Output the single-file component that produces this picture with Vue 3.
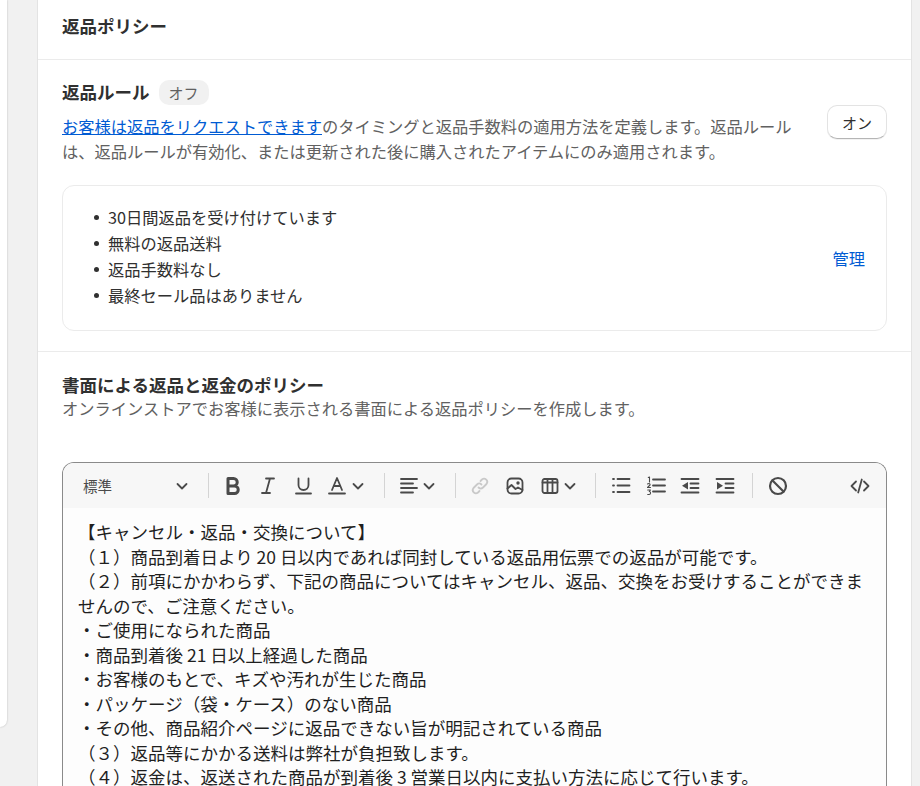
<script setup>
const rules = ['30日間返品を受け付けています', '無料の返品送料', '返品手数料なし', '最終セール品はありません']
const lines = [
  '【キャンセル・返品・交換について】',
  '（１）商品到着日より 20 日以内であれば同封している返品用伝票での返品が可能です。',
  '（２）前項にかかわらず、下記の商品についてはキャンセル、返品、交換をお受けすることができませんので、ご注意ください。',
  '・ご使用になられた商品',
  '・商品到着後 21 日以上経過した商品',
  '・お客様のもとで、キズや汚れが生じた商品',
  '・パッケージ（袋・ケース）のない商品',
  '・その他、商品紹介ページに返品できない旨が明記されている商品',
  '（３）返品等にかかる送料は弊社が負担致します。',
  '（４）返金は、返送された商品が到着後 3 営業日以内に支払い方法に応じて行います。'
]
</script>

<template>
  <div class="page">
    <aside class="side"></aside>
    <main class="card">
      <header class="head"><h2>返品ポリシー</h2></header>
      <section class="rules">
        <div class="rules-top">
          <div class="rules-text">
            <div class="title-row"><h3>返品ルール</h3><span class="badge">オフ</span></div>
            <p class="desc"><a>お客様は返品をリクエストできます</a>のタイミングと返品手数料の適用方法を定義します。返品ルールは、返品ルールが有効化、または更新された後に購入されたアイテムにのみ適用されます。</p>
          </div>
          <button class="on">オン</button>
        </div>
        <div class="rule-box">
          <ul><li v-for="r in rules" :key="r">{{ r }}</li></ul>
          <a class="manage">管理</a>
        </div>
      </section>
      <section class="written">
        <h3>書面による返品と返金のポリシー</h3>
        <p class="sub">オンラインストアでお客様に表示される書面による返品ポリシーを作成します。</p>
        <div class="editor">
          <div class="toolbar">
            <div class="select"><span>標準</span>
              <svg class="chev" viewBox="0 0 12 12"><path d="M1.500 4l4.500 4.500L10.500 4"/></svg>
            </div>
            <i class="sep"></i>
            <svg class="ic" viewBox="0 0 20 20"><path class="thick" d="M5 2.500h5.500a3.700 3.700 0 0 1 0 7.500H5zM5 10h6.500a3.700 3.700 0 0 1 0 7.500H5z"/></svg>
            <svg class="ic" viewBox="0 0 20 20"><path d="M8 2.500h8M4 17h8M12 2.500L8 17"/></svg>
            <svg class="ic" viewBox="0 0 20 20"><path d="M5.500 2.500V9a5 5 0 0 0 10 0V2.500M3 17.500h15"/></svg>
            <span class="combo">
              <svg class="ic" viewBox="0 0 20 20"><path d="M5 14L10 2l5 12M6.800 10h6.400M2 17.500h16"/></svg>
              <svg class="chev" viewBox="0 0 12 12"><path d="M1.500 4l4.500 4.500L10.500 4"/></svg>
            </span>
            <i class="sep nudge"></i>
            <span class="combo">
              <svg class="ic" viewBox="0 0 20 20"><path d="M2 3h16M2 7.500h12M2 12h16M2 16.500h12"/></svg>
              <svg class="chev" viewBox="0 0 12 12"><path d="M1.500 4l4.500 4.500L10.500 4"/></svg>
            </span>
            <i class="sep"></i>
            <svg class="ic off" viewBox="0 0 20 20"><path d="M8.500 11.500a3.200 3.200 0 0 0 4.500 0l3.500-3.500A3.200 3.200 0 0 0 12 3.500L10.500 5M11.500 8.500a3.200 3.200 0 0 0-4.500 0L3.500 12A3.200 3.200 0 0 0 8 16.500L9.500 15"/></svg>
            <svg class="ic" viewBox="0 0 20 20"><rect x="2.500" y="2.500" width="15" height="15" rx="4"/><circle class="solid" cx="13" cy="7" r="1.700"/><path d="M2.500 12.500l4-3.500 4 4 2.500-1.500 4.500 2.500"/></svg>
            <span class="combo">
              <svg class="ic" viewBox="0 0 20 20"><rect x="2.500" y="3" width="15" height="14" rx="2"/><path d="M2.500 6.500h15M7.500 3v14M12.500 3v14"/></svg>
              <svg class="chev" viewBox="0 0 12 12"><path d="M1.500 4l4.500 4.500L10.500 4"/></svg>
            </span>
            <i class="sep"></i>
            <svg class="ic" viewBox="0 0 20 20"><path d="M6.500 3h12M6.500 9.500h12M6.500 16h12"/><path d="M2 3h1M2 9.500h1M2 16h1"/></svg>
            <svg class="ic" viewBox="0 0 20 20"><path d="M7 3.500h12M7 9.500h12M7 15.500h12"/><path class="fine" d="M2.300 1.500l1.200-.5v5M1.500 8c1.500-1 3-.3 2.500 1l-2.500 2.500h3M1.700 14h2.800l-1.200 1.500c1.700 0 1.700 3-.2 3h-1.400"/></svg>
            <svg class="ic" viewBox="0 0 20 20"><path d="M1.500 3h17M10.500 7.500h8M10.500 12h8M1.500 16.500h17"/><path class="solid" d="M8 6v7.500L2 9.750z"/></svg>
            <svg class="ic" viewBox="0 0 20 20"><path d="M1.500 3h17M10.500 7.500h8M10.500 12h8M1.500 16.500h17"/><path class="solid" d="M2 6v7.500l6-3.750z"/></svg>
            <i class="sep wide"></i>
            <svg class="ic bold" viewBox="0 0 20 20"><circle cx="10" cy="10" r="8"/><path d="M4.500 4.500l11 11"/></svg>
            <span class="grow"></span>
            <svg class="ic" viewBox="0 0 20 20"><path d="M6 5.500L1.500 10 6 14.500M14 5.500l4.500 4.500L14 14.500M11.800 3.500l-3.600 13"/></svg>
          </div>
          <div class="content"><p v-for="(l, i) in lines" :key="i">{{ l }}</p></div>
        </div>
      </section>
    </main>
  </div>
</template>

<style>
html, body { margin: 0; height: 100%; overflow: hidden; background: #f1f1f1; }
</style>

<style scoped>
.page {
  height: 786px; overflow: hidden; display: flex; align-items: flex-start;
  background: #f1f1f1; color: #303030;
  font-family: "Noto Sans CJK JP", "Noto Sans", sans-serif; font-size: 16.25px; line-height: 25px;
}
.side {
  width: 7px; height: 727px; flex: none; background: #fff;
  border-radius: 0 0 8px 0; box-shadow: 0 0 2px rgba(0,0,0,.25);
}
.card {
  width: 873px; margin-left: 31px; min-height: 786px; flex: none; background: #fff;
  box-shadow: 0 0 0 1px #e3e3e3;
}
h2, h3, p, ul { margin: 0; padding: 0; }
h2, h3 { font-size: 17.5px; font-weight: 700; line-height: 25px; color: #303030; }
.head { height: 46px; padding: 13px 24px 0; border-bottom: 1px solid #ebebeb; }
.rules { padding: 20px 24px 20px; border-bottom: 1px solid #ebebeb; }
.rules-top { display: flex; align-items: center; gap: 24px; }
.rules-text { flex: 1; min-width: 0; }
.title-row { display: flex; align-items: center; gap: 9px; height: 25px; }
.title-row h3 { margin-bottom: 2px; }
.badge {
  background: #f1f1f1; color: #616161; border-radius: 10px; height: 25px; padding: 0 10px;
  font-size: 15px; line-height: 25px;
}
.desc { color: #616161; margin-top: 9px; }
.desc a { color: #005bd3; text-decoration: underline; }
.on {
  flex: none; width: 60px; height: 34px; padding: 0; background: #fff; color: #303030;
  border: 1px solid #e3e3e3; border-bottom-color: #b5b5b5; border-radius: 10px;
  font: inherit; font-size: 15px; box-shadow: 0 1px 0 rgba(0,0,0,.05);
}
.rule-box {
  margin-top: 21px; height: 146px; box-sizing: border-box; padding: 0 21px 0 31px;
  border: 1px solid #ebebeb; border-radius: 12px; display: flex; align-items: center;
  justify-content: space-between;
}
.rule-box ul { line-height: 26px; color: #303030; list-style: none; padding-bottom: 4px; }
.rule-box li { display: flex; align-items: center; }
.rule-box li::before {
  content: ""; width: 5px; height: 5px; border-radius: 50%; background: #303030; margin-right: 9px; flex: none;
}
.manage { color: #005bd3; }
.written { padding: 20px 24px 0; }
.sub { color: #616161; line-height: 25px; margin-top: -1px; }
.editor {
  margin-top: 41px; border: 1px solid #8a8a8a; border-bottom: 0; border-radius: 12px 12px 0 0;
  overflow: hidden; background: #fdfdfd;
}
.toolbar {
  height: 45px; background: #f7f7f7; display: flex; align-items: center; padding: 0 16px 0 20px; gap: 14.7px;
}
.select { width: 105px; margin-right: 5px; display: flex; align-items: center; justify-content: space-between; font-size: 14.5px; color: #4a4a4a; flex: none; }
.sep { width: 1px; height: 25px; background: #d4d4d4; flex: none; }
.sep.nudge { margin-left: .5px; margin-right: -.5px; }
.sep.wide { margin-left: 2.5px; }
.ic { width: 20px; height: 20px; flex: none; fill: none; stroke: #4a4a4a; stroke-width: 1.8; stroke-linecap: round; stroke-linejoin: round; }
.ic .thick { stroke-width: 3; }
.ic .fine { stroke-width: 1.1; }
.ic .solid { fill: #4a4a4a; stroke: none; }
.ic.off { stroke: #c9c9c9; }
.ic.bold { stroke-width: 2.2; }
.chev { width: 12px; height: 12px; flex: none; fill: none; stroke: #4a4a4a; stroke-width: 1.8; stroke-linecap: round; stroke-linejoin: round; }
.combo { display: flex; align-items: center; gap: 4.5px; margin-right: 4.5px; flex: none; }
.grow { flex: 1; }
.content { padding: 12px 15px 0; font-size: 17.5px; line-height: 24.5px; color: #1f1f1f; height: 400px; }
</style>
